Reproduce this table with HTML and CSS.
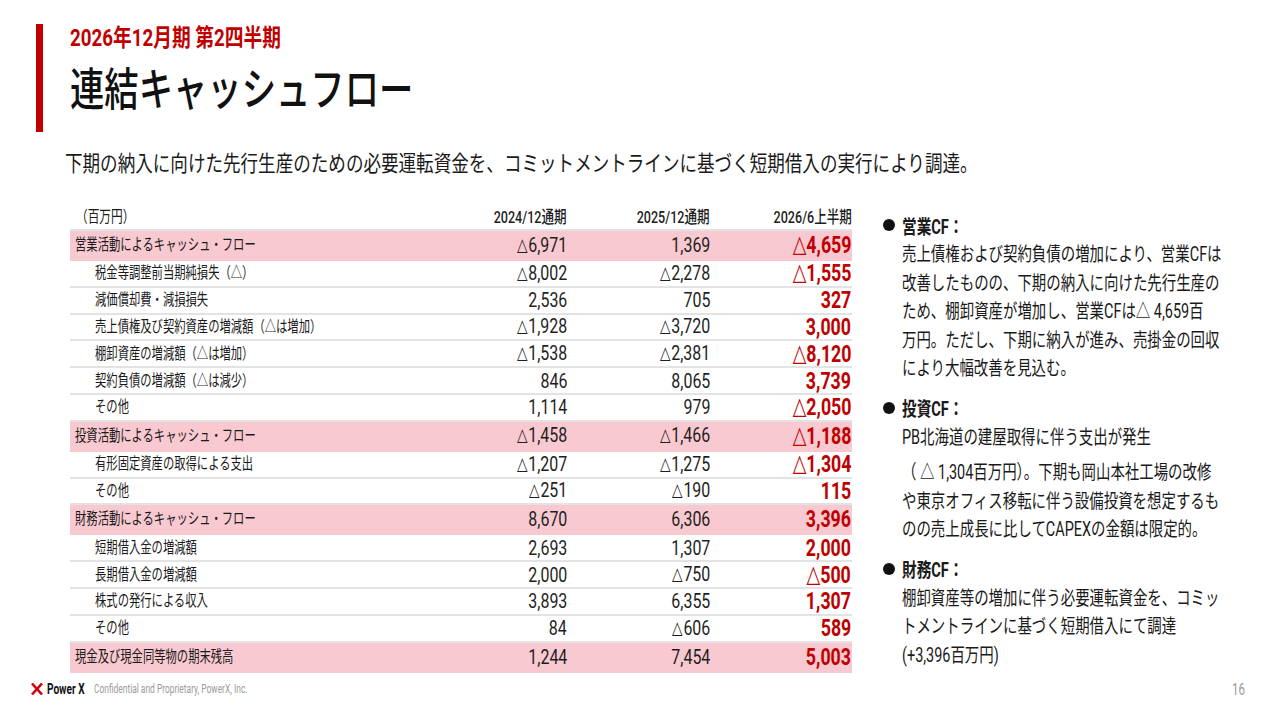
FILE: index.html
```html
<!DOCTYPE html>
<html lang="ja">
<head>
<meta charset="utf-8">
<title>連結キャッシュフロー</title>
<link rel="stylesheet" href="styles.css">
</head>
<body>
<div class="slide">
  <header class="head">
    <div class="kicker"><span>2026年12月期 第2四半期</span></div>
    <h1 class="title"><span>連結キャッシュフロー</span></h1>
  </header>
  <p class="lead"><span>下期の納入に向けた先行生産のための必要運転資金を、コミットメントラインに基づく短期借入の実行により調達。</span></p>

  <div class="main">
    <div class="cf">
      <div class="row hdr">
        <div class="lbl"><span>（百万円）</span></div>
        <div class="num"><span>2024/12通期</span></div>
        <div class="num"><span>2025/12通期</span></div>
        <div class="num"><span>2026/6上半期</span></div>
      </div>
      <div class="row sec">
        <div class="lbl"><span>営業活動によるキャッシュ・フロー</span></div>
        <div class="num"><span><b class="tri">△</b>6,971</span></div>
        <div class="num"><span>1,369</span></div>
        <div class="num hl"><span><b class="tri">△</b>4,659</span></div>
      </div>
      <div class="row sub">
        <div class="lbl"><span>税金等調整前当期純損失（△）</span></div>
        <div class="num"><span><b class="tri">△</b>8,002</span></div>
        <div class="num"><span><b class="tri">△</b>2,278</span></div>
        <div class="num hl"><span><b class="tri">△</b>1,555</span></div>
      </div>
      <div class="row sub">
        <div class="lbl"><span>減価償却費・減損損失</span></div>
        <div class="num"><span>2,536</span></div>
        <div class="num"><span>705</span></div>
        <div class="num hl"><span>327</span></div>
      </div>
      <div class="row sub">
        <div class="lbl"><span>売上債権及び契約資産の増減額（△は増加）</span></div>
        <div class="num"><span><b class="tri">△</b>1,928</span></div>
        <div class="num"><span><b class="tri">△</b>3,720</span></div>
        <div class="num hl"><span>3,000</span></div>
      </div>
      <div class="row sub">
        <div class="lbl"><span>棚卸資産の増減額（△は増加）</span></div>
        <div class="num"><span><b class="tri">△</b>1,538</span></div>
        <div class="num"><span><b class="tri">△</b>2,381</span></div>
        <div class="num hl"><span><b class="tri">△</b>8,120</span></div>
      </div>
      <div class="row sub">
        <div class="lbl"><span>契約負債の増減額（△は減少）</span></div>
        <div class="num"><span>846</span></div>
        <div class="num"><span>8,065</span></div>
        <div class="num hl"><span>3,739</span></div>
      </div>
      <div class="row sub">
        <div class="lbl"><span>その他</span></div>
        <div class="num"><span>1,114</span></div>
        <div class="num"><span>979</span></div>
        <div class="num hl"><span><b class="tri">△</b>2,050</span></div>
      </div>
      <div class="row sec">
        <div class="lbl"><span>投資活動によるキャッシュ・フロー</span></div>
        <div class="num"><span><b class="tri">△</b>1,458</span></div>
        <div class="num"><span><b class="tri">△</b>1,466</span></div>
        <div class="num hl"><span><b class="tri">△</b>1,188</span></div>
      </div>
      <div class="row sub">
        <div class="lbl"><span>有形固定資産の取得による支出</span></div>
        <div class="num"><span><b class="tri">△</b>1,207</span></div>
        <div class="num"><span><b class="tri">△</b>1,275</span></div>
        <div class="num hl"><span><b class="tri">△</b>1,304</span></div>
      </div>
      <div class="row sub">
        <div class="lbl"><span>その他</span></div>
        <div class="num"><span><b class="tri">△</b>251</span></div>
        <div class="num"><span><b class="tri">△</b>190</span></div>
        <div class="num hl"><span>115</span></div>
      </div>
      <div class="row sec">
        <div class="lbl"><span>財務活動によるキャッシュ・フロー</span></div>
        <div class="num"><span>8,670</span></div>
        <div class="num"><span>6,306</span></div>
        <div class="num hl"><span>3,396</span></div>
      </div>
      <div class="row sub">
        <div class="lbl"><span>短期借入金の増減額</span></div>
        <div class="num"><span>2,693</span></div>
        <div class="num"><span>1,307</span></div>
        <div class="num hl"><span>2,000</span></div>
      </div>
      <div class="row sub">
        <div class="lbl"><span>長期借入金の増減額</span></div>
        <div class="num"><span>2,000</span></div>
        <div class="num"><span><b class="tri">△</b>750</span></div>
        <div class="num hl"><span><b class="tri">△</b>500</span></div>
      </div>
      <div class="row sub">
        <div class="lbl"><span>株式の発行による収入</span></div>
        <div class="num"><span>3,893</span></div>
        <div class="num"><span>6,355</span></div>
        <div class="num hl"><span>1,307</span></div>
      </div>
      <div class="row sub">
        <div class="lbl"><span>その他</span></div>
        <div class="num"><span>84</span></div>
        <div class="num"><span><b class="tri">△</b>606</span></div>
        <div class="num hl"><span>589</span></div>
      </div>
      <div class="row sec last">
        <div class="lbl"><span>現金及び現金同等物の期末残高</span></div>
        <div class="num"><span>1,244</span></div>
        <div class="num"><span>7,454</span></div>
        <div class="num hl"><span>5,003</span></div>
      </div>
    </div>

    <div class="notes">
      <div class="note">
        <div class="note-h"><i class="dot"></i><span>営業CF：</span></div>
        <div class="note-b"><span>売上債権および契約負債の増加により、営業CFは<br>改善したものの、下期の納入に向けた先行生産の<br>ため、棚卸資産が増加し、営業CFは△ 4,659百<br>万円。ただし、下期に納入が進み、売掛金の回収<br>により大幅改善を見込む。</span></div>
      </div>
      <div class="note">
        <div class="note-h"><i class="dot"></i><span>投資CF：</span></div>
        <div class="note-b"><span>PB北海道の建屋取得に伴う支出が発生</span></div>
        <div class="note-b para"><span>（ △ 1,304百万円）。下期も岡山本社工場の改修<br>や東京オフィス移転に伴う設備投資を想定するも<br>のの売上成長に比してCAPEXの金額は限定的。</span></div>
      </div>
      <div class="note">
        <div class="note-h"><i class="dot"></i><span>財務CF：</span></div>
        <div class="note-b"><span>棚卸資産等の増加に伴う必要運転資金を、コミッ<br>トメントラインに基づく短期借入にて調達<br>(+3,396百万円)</span></div>
      </div>
    </div>
  </div>

  <footer class="foot">
    <div class="brand">
      <svg class="logo" width="12" height="12" viewBox="0 0 12 12" aria-hidden="true">
        <path d="M1 0.5 L11 11.5" stroke="#d8000c" stroke-width="2.6" fill="none"/>
        <path d="M11 0.5 L1 11.5" stroke="#d8000c" stroke-width="2.6" fill="none"/>
      </svg>
      <span class="bname">Power X</span>
      <span class="conf">Confidential and Proprietary, PowerX, Inc.</span>
    </div>
    <div class="pnum"><span>16</span></div>
  </footer>
</div>
</body>
</html>
```

FILE: styles.css
```css
html, body {
  margin: 0;
  padding: 0;
  background: #ffffff;
  overflow: hidden;
}

body {
  font-family: "Roboto", "Noto Sans CJK JP", sans-serif;
  color: #1a1a1a;
}

.slide {
  width: 1280px;
  height: 720px;
  display: flex;
  flex-direction: column;
  overflow: hidden;
}

/* all condensed text pieces */
.kicker span,
.title span,
.lead span,
.lbl span,
.num span,
.note-h span,
.note-b span,
.bname,
.conf,
.pnum span {
  display: inline-block;
  white-space: nowrap;
  transform-origin: 0 50%;
}

/* ---------- header ---------- */
.head {
  margin: 24px 0 0 36px;
  height: 109px;
  box-sizing: border-box;
  border-left: 7px solid #c00000;
  padding-left: 27px;
}

.kicker {
  font-size: 24px;
  line-height: 30px;
  font-weight: 700;
  color: #c00000;
  margin-top: -1px;
}
.kicker span { transform: scaleX(0.78); }

.title {
  margin: 12px 0 0 0;
  font-size: 45px;
  line-height: 52px;
  font-weight: 500;
  color: #111;
}
.title span { transform: scaleX(0.763); }

.lead {
  margin: 18px 0 0 65px;
  font-size: 22px;
  line-height: 28px;
  color: #1a1a1a;
}
.lead span { transform: scaleX(0.798); }

/* ---------- main ---------- */
.main {
  display: flex;
  margin-top: 26px;
  padding-left: 70px;
}

.cf {
  width: 782px;
  flex: none;
}

.row {
  display: grid;
  grid-template-columns: 357px 140px 143px 142px;
  align-items: center;
  box-sizing: border-box;
  height: 26.8px;
  border-bottom: 2px solid #e3e3e3;
}

.row.hdr {
  height: 27px;
}

.row.sec {
  height: 30px;
  background: #f8c9d0;
  border-bottom-color: #f8c9d0;
}

.lbl {
  font-size: 15.5px;
  line-height: 20px;
  padding-left: 5px;
  color: #1a1a1a;
}
.lbl span { transform: scaleX(0.73); }

.row.sub .lbl { padding-left: 25px; }
.row.hdr .lbl { padding-left: 6px; font-size: 16px; }

.num {
  text-align: right;
  font-size: 21px;
  line-height: 22px;
  color: #1e1e1e;
}
.num span {
  transform-origin: 100% 50%;
  transform: scaleX(0.76);
}

.tri {
  font-family: "DejaVu Sans", "Noto Sans CJK JP", sans-serif;
  font-weight: 400;
  font-size: 0.86em;
  margin-right: 1px;
  position: relative;
  top: -1px;
}

.row.hdr .num {
  font-size: 17px;
  font-weight: 500;
}
.row.hdr .num span { transform: scaleX(0.74); }

.num.hl {
  font-size: 24px;
  font-weight: 700;
  color: #c00000;
  padding-right: 1px;
}
.num.hl .tri {
  font-weight: 700;
  font-size: 1em;
  margin-right: 0;
  top: -1px;
}
.row.hdr .num.hl { color: #1e1e1e; font-size: 17px; font-weight: 500; }
.num.hl span { transform: scaleX(0.74); }

/* ---------- notes ---------- */
.notes {
  margin-left: 31px;
  margin-top: 7px;
  width: 360px;
}

.note { margin-bottom: 10px; }

.note-h {
  display: flex;
  align-items: center;
  height: 28px;
  font-size: 19.5px;
  font-weight: 700;
}
.note-h span { transform: scaleX(0.75); }

.dot {
  width: 12px;
  height: 12px;
  border-radius: 50%;
  background: #111;
  margin-right: 7px;
  flex: none;
}

.note-b {
  padding-left: 19px;
  margin-top: 2px;
  font-size: 19.5px;
  line-height: 28.5px;
  color: #1a1a1a;
}
.note-b span { transform: scaleX(0.74); }
.note-b.para { margin-top: 7px; }

/* ---------- footer ---------- */
.foot {
  margin-top: auto;
  height: 18px;
  margin-bottom: 22px;
  display: flex;
  justify-content: space-between;
  align-items: center;
  padding: 0 35px 0 31px;
}

.brand {
  display: flex;
  align-items: center;
}

.logo { flex: none; }

.bname {
  margin-left: 4px;
  font-size: 14px;
  font-weight: 700;
  color: #111;
  transform: scaleX(0.72);
  width: 33px;
}

.conf {
  margin-left: 14px;
  font-size: 12px;
  color: #9a9a9a;
  transform: scaleX(0.7);
}

.pnum {
  font-size: 16px;
  color: #9a9a9a;
}
.pnum span {
  transform-origin: 100% 50%;
  transform: scaleX(0.72);
}
```
